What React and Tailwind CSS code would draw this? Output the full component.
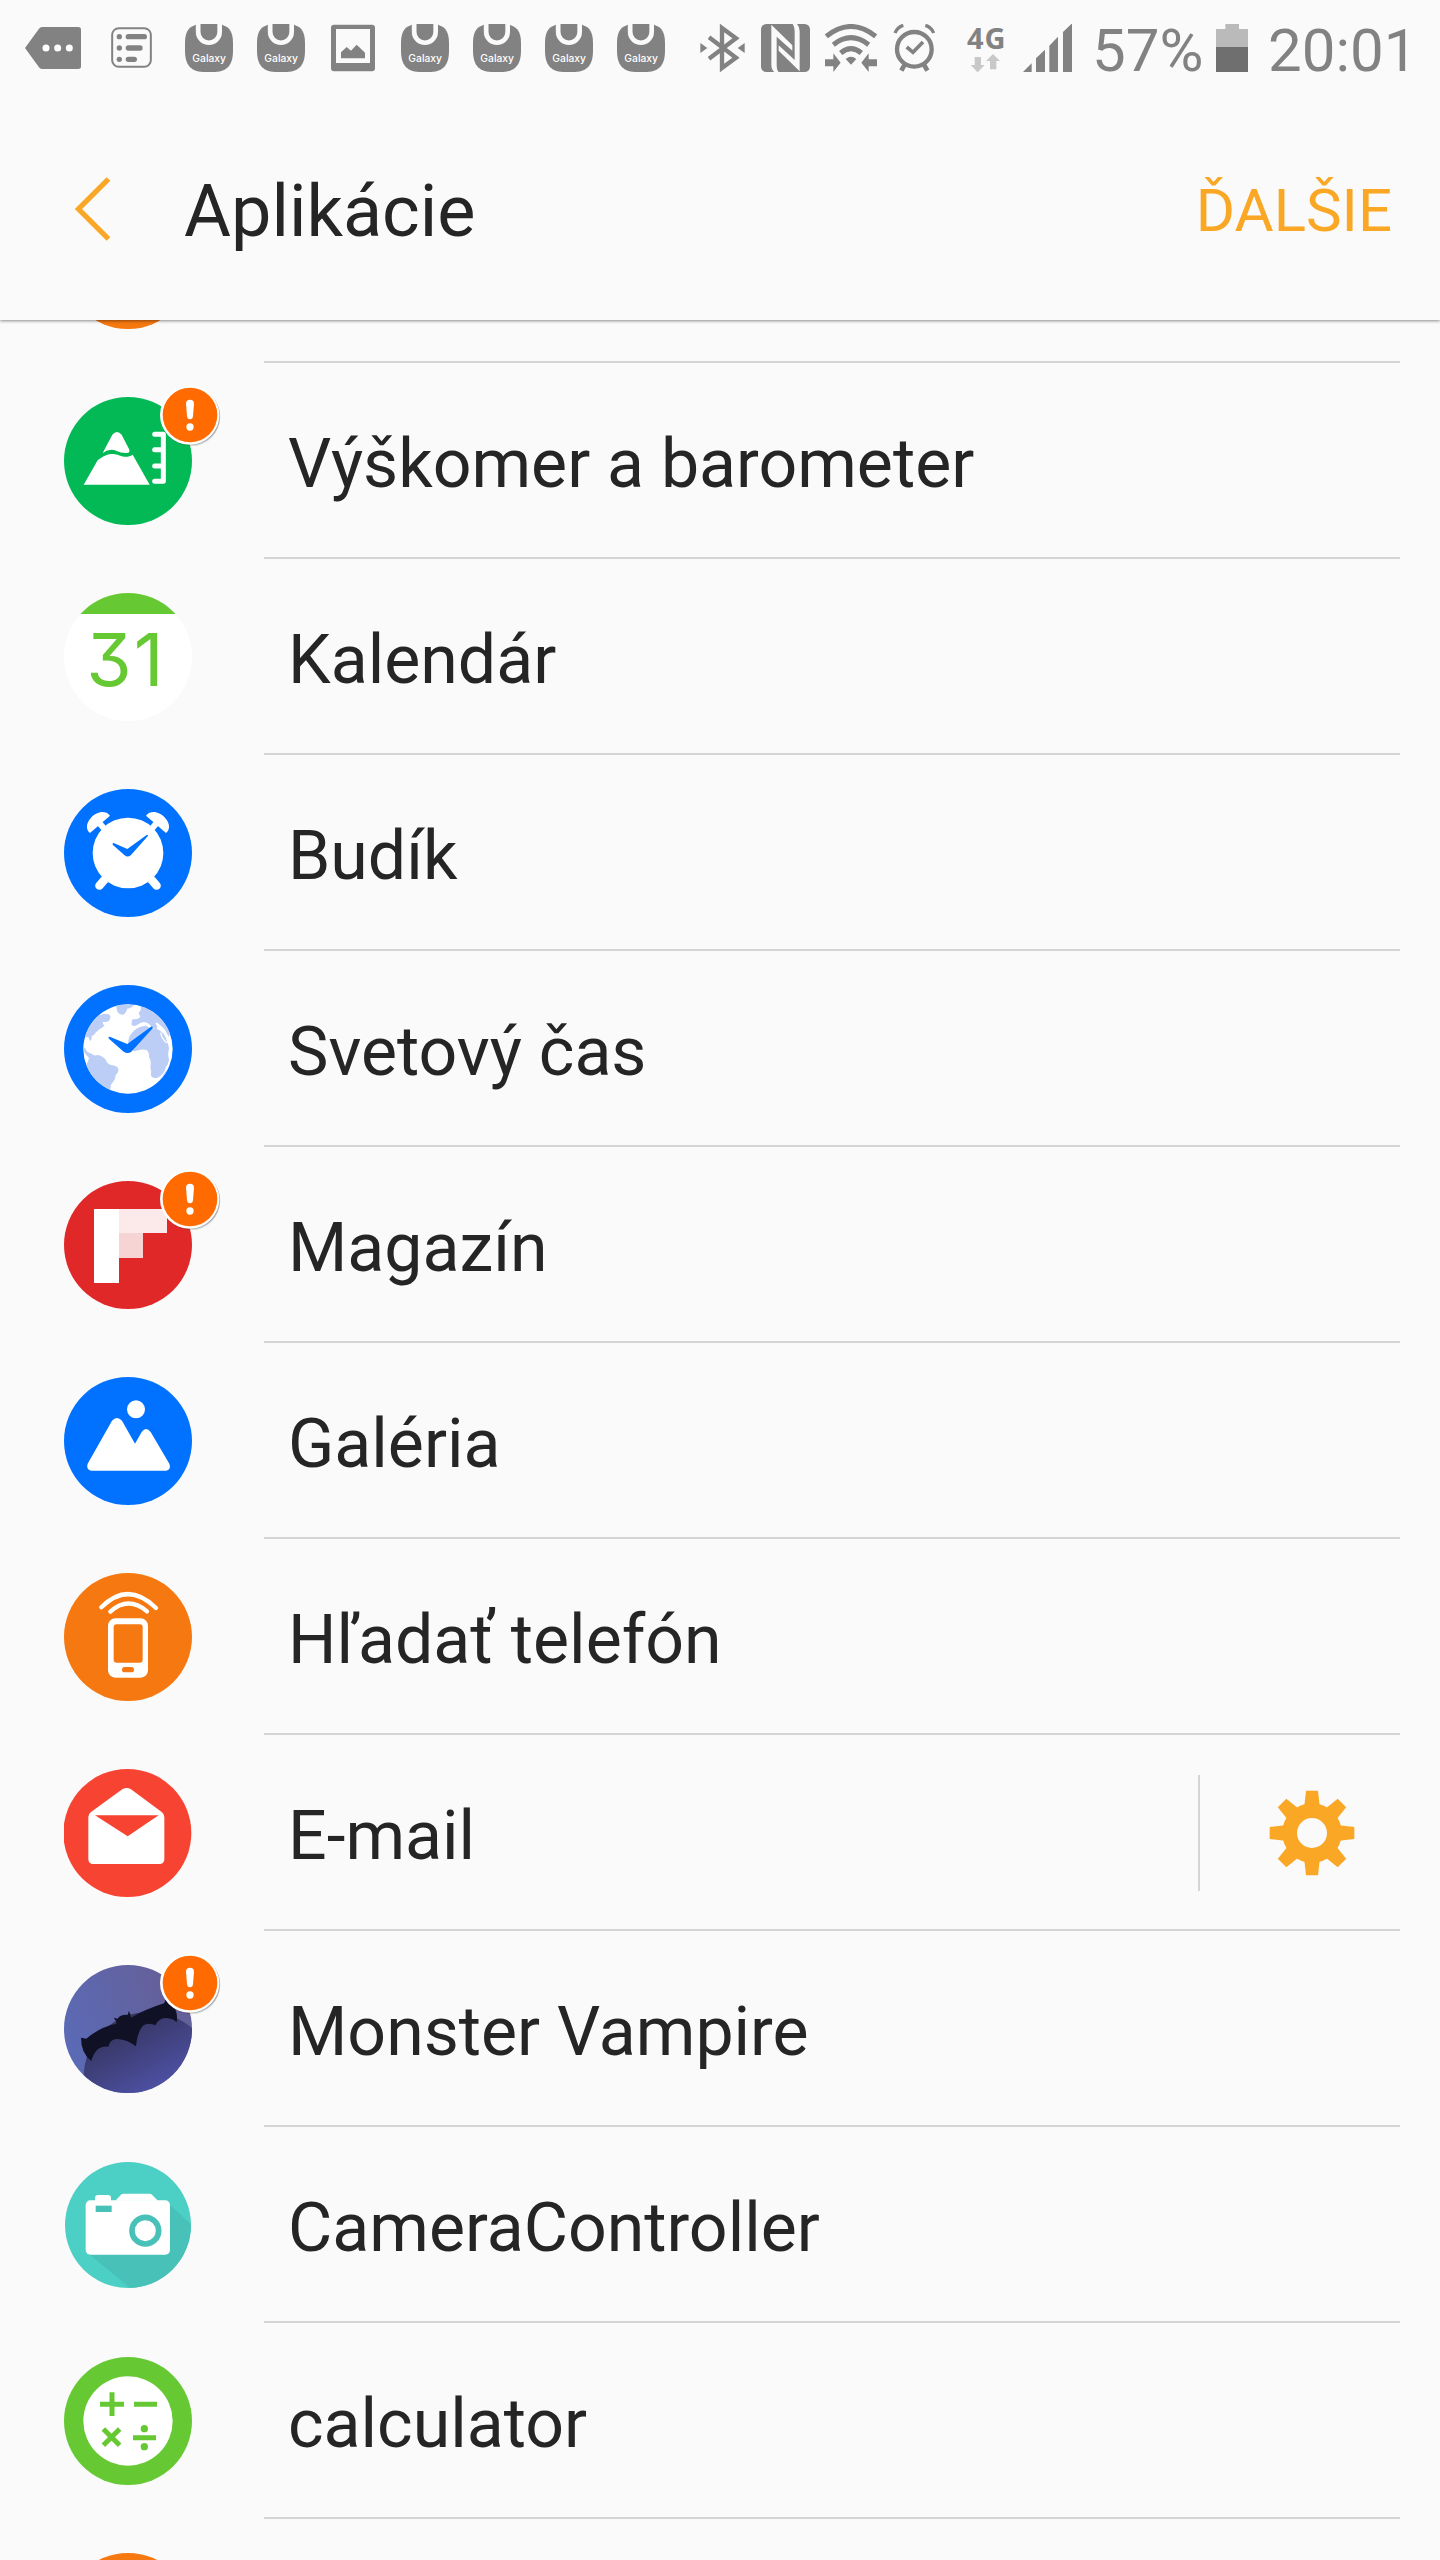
const GALAXY_SLOTS_BEFORE = [0, 1];
const GALAXY_SLOTS_AFTER = [0, 1, 2, 3];

function MessageTagIcon() {
  return (
    <svg viewBox="0 0 168 144" className="ml-[25px] w-14 h-12 shrink-0">
      <path
        fill="#828282"
        d="M0 72L42 14Q46 9 51 9H160Q168 9 168 17V127Q168 135 160 135H51Q46 135 42 130Z"
      />
      <g fill="#fff">
        <circle cx="63" cy="72" r="10.5" />
        <circle cx="98" cy="72" r="10.5" />
        <circle cx="133" cy="72" r="10.5" />
      </g>
    </svg>
  );
}

function ListIcon() {
  return (
    <svg viewBox="0 0 123 144" className="ml-[30px] w-[41px] h-12 shrink-0">
      <rect x="3.5" y="12.5" width="116" height="116" rx="20" fill="none" stroke="#828282" strokeWidth="6" />
      <g fill="#828282">
        <circle cx="25" cy="38" r="8" />
        <circle cx="25" cy="72" r="8" />
        <circle cx="25" cy="106" r="8" />
      </g>
      <path
        d="M52 38H100M52 72H87M52 106H70"
        stroke="#828282"
        strokeWidth="16"
        strokeLinecap="round"
      />
    </svg>
  );
}

function GalaxyIcon() {
  return (
    <svg viewBox="0 0 144 144" className="w-12 h-12 shrink-0">
      <path
        fill="#828282"
        d="M0 56C0 20 14 6 40 1L46 0H98L104 1C130 6 144 20 144 56V80C144 126 124 144 82 144H62C20 144 0 126 0 80Z"
      />
      <path
        d="M39.5 -2V24A32.2 32.2 0 0 0 104 24V-2"
        fill="none"
        stroke="#fafafa"
        strokeWidth="14"
      />
      <text
        x="22"
        y="114"
        textLength="101"
        lengthAdjust="spacingAndGlyphs"
        fill="#fff"
        className="font-['Inter',sans-serif] text-[30px] font-medium"
      >
        Galaxy
      </text>
    </svg>
  );
}

function PictureIcon() {
  return (
    <svg viewBox="0 0 132 144" className="mx-0.5 w-11 h-12 shrink-0">
      <path
        fill="#828282"
        fillRule="evenodd"
        d="M9 2H123Q132 2 132 11V133Q132 142 123 142H9Q0 142 0 133V11Q0 2 9 2ZM15 15V117H117V15ZM30 103V85L47 69L60 80L77 62L102 86V103Z"
      />
    </svg>
  );
}

function BluetoothIcon() {
  return (
    <svg viewBox="0 0 135 144" className="ml-[35px] w-[45px] h-12 shrink-0">
      <path
        d="M27 40L108 101L66 132V12L108 43L27 104"
        fill="none"
        stroke="#828282"
        strokeWidth="13"
      />
      <path fill="#828282" d="M1 57L22 72L1 87ZM134 57L113 72L134 87Z" />
    </svg>
  );
}

function NfcIcon() {
  return (
    <svg viewBox="0 0 147 144" className="ml-4 w-[49px] h-12 shrink-0">
      <rect width="147" height="144" rx="16" fill="#828282" />
      <path
        fill="#fafafa"
        d="M31 2L94 64V80L47 38V122Q47 138 53 144H40Q31 136 31 122ZM116 142L53 80V64L101 108V22Q101 8 95 0H108Q116 8 116 22Z"
      />
    </svg>
  );
}

function WifiIcon() {
  return (
    <svg viewBox="0 0 156 144" className="ml-[15px] w-[52px] h-12 shrink-0">
      <path
        d="M4 37Q78 -22 152 37M25 62Q78 20 131 62M47 87Q78 61 109 87"
        fill="none"
        stroke="#828282"
        strokeWidth="15"
      />
      <path
        fill="#828282"
        d="M62 105Q78 92 94 105L78 122ZM0 106H25V88L47 116L25 144V127H0ZM156 106H131V88L109 116L131 144V127H156Z"
      />
    </svg>
  );
}

function StatusAlarmIcon() {
  return (
    <svg viewBox="0 0 129 144" className="ml-4 w-[43px] h-12 shrink-0">
      <g fill="none" stroke="#828282">
        <circle cx="64" cy="76" r="52" strokeWidth="13" />
        <path d="M41 69L60 85L90 54" strokeWidth="11" />
        <path d="M35 122L25 140M93 122L103 140" strokeWidth="14" />
        <path d="M6 27Q13 9 31 4M122 27Q115 9 97 4" strokeWidth="10" />
      </g>
    </svg>
  );
}

function NetworkIcon() {
  return (
    <div className="relative ml-[31px] w-[38px] h-12 shrink-0">
      <span className="block -mt-1 text-[29px] leading-[36px] font-bold font-['Open_Sans',sans-serif] tracking-[1px]">
        4G
      </span>
      <svg viewBox="0 0 114 60" className="absolute left-0 top-7 w-[38px] h-5">
        <path
          fill="#c8c8c8"
          d="M23 15H42V39H53L32 61L11 39H23ZM69 52V27H57L78 6L99 27H88V52Z"
        />
      </svg>
    </div>
  );
}

function SignalIcon() {
  return (
    <svg viewBox="0 0 147 144" className="ml-[18px] w-[49px] h-12 shrink-0">
      <path
        fill="#828282"
        d="M0 144L26 118V144ZM39 144V103L66 77V144ZM79 144V65L105 38V144ZM120 144V24L147 -2V144Z"
      />
    </svg>
  );
}

function BatteryIcon() {
  return (
    <svg viewBox="0 0 96 144" className="w-8 h-12 shrink-0">
      <path fill="#bababa" d="M28 0H69V15H96V69H0V15H28Z" />
      <rect y="69" width="96" height="75" fill="#6f6f6f" />
    </svg>
  );
}

function StatusBar() {
  return (
    <div className="h-24 pt-6 flex items-start text-[#828282]">
      <MessageTagIcon />
      <ListIcon />
      <div className="ml-[33px] flex gap-6">
        {GALAXY_SLOTS_BEFORE.map((slot) => (
          <GalaxyIcon key={slot} />
        ))}
        <PictureIcon />
        {GALAXY_SLOTS_AFTER.map((slot) => (
          <GalaxyIcon key={slot} />
        ))}
      </div>
      <BluetoothIcon />
      <NfcIcon />
      <WifiIcon />
      <StatusAlarmIcon />
      <NetworkIcon />
      <SignalIcon />
      <span className="ml-5 -mt-[3px] w-[124px] text-[60px] leading-[60px]">
        57%
      </span>
      <BatteryIcon />
      <span className="ml-5 -mt-[3px] text-[60px] leading-[60px]">
        20:01
      </span>
    </div>
  );
}

function AltimeterIcon() {
  return (
    <>
      <circle cx="192" cy="192" r="192" fill="#03b956" />
      <path
        fill="#fff"
        d="M59 263L101 190C125 170 145 168 160 173S190 184 206 173L257 263ZM116 168L145 113Q159 97 173 113L195 156Q200 168 188 168Q172 169 158 162Q138 152 116 168Z"
      />
      <path
        d="M272 112H298V253H272M272 158H298M272 207H298"
        fill="none"
        stroke="#fff"
        strokeWidth="15"
        strokeLinecap="round"
        strokeLinejoin="round"
      />
    </>
  );
}

function CalendarIcon() {
  return (
    <>
      <clipPath id="calendarTop">
        <rect width="384" height="63" />
      </clipPath>
      <circle cx="192" cy="192" r="192" fill="#fff" />
      <circle cx="192" cy="192" r="192" fill="#66c933" clipPath="url(#calendarTop)" />
      <text
        x="67 209"
        y="280"
        fill="#66c933"
        className="font-['Inter',sans-serif] text-[220px] [font-feature-settings:'cv09']"
      >
        31
      </text>
    </>
  );
}

function AlarmIcon() {
  return (
    <>
      <circle cx="192" cy="192" r="192" fill="#0072ff" />
      <circle cx="192" cy="192" r="106" fill="#fff" />
      <path
        d="M134 258L106 290M250 258L278 290"
        stroke="#fff"
        strokeWidth="25"
        strokeLinecap="round"
      />
      <path
        d="M100 95L126 125M284 95L258 125"
        stroke="#fff"
        strokeWidth="18"
      />
      <path
        fill="#fff"
        d="M78 132C66 124 65 104 80 88C96 68 124 62 138 80ZM306 132C318 124 319 104 304 88C288 68 260 62 246 80Z"
      />
      <path
        fill="#0072ff"
        d="M149 162L190 180L248 138Q254 136 251 142L201 198Q191 207 181 198L146 167Q144 162 149 162Z"
      />
    </>
  );
}

function WorldClockIcon() {
  return (
    <>
      <clipPath id="globe">
        <circle cx="192" cy="192" r="134" />
      </clipPath>
      <circle cx="192" cy="192" r="192" fill="#0072ff" />
      <circle cx="192" cy="192" r="134" fill="#fff" />
      <g fill="#bccdf6" clipPath="url(#globe)">
        <path d="M50 180L60 158Q66 154 74 157Q75 166 80 168Q84 162 83 153Q92 151 96 142Q106 132 116 127L122 121Q114 118 117 110Q127 113 135 107Q142 98 137 90Q129 84 116 87Q107 93 105 88L128 70L60 90Z" />
        <path d="M56 184Q66 190 67 198Q77 205 84 207Q90 214 100 210Q115 212 126 225Q128 235 140 240Q164 243 163 253Q165 260 155 270Q153 288 145 293Q137 300 140 320L100 310L66 240Q74 228 75 218Q62 208 58 195Z" />
        <path d="M156 60L160 80Q167 91 179 89Q188 80 190 71Q201 70 211 60Z" />
        <path d="M232 50L230 76Q223 82 224 88Q232 94 226 99Q216 104 206 102Q202 110 203 119Q209 127 219 120Q228 113 240 111Q252 113 258 120Q262 128 275 132Q284 128 278 121Q270 112 280 113Q291 122 304 135Q308 145 314 156Q315 140 335 150L330 70Z" />
        <path d="M246 122Q258 132 276 130Q299 140 307 163Q314 180 315 190Q310 210 315 222Q314 238 306 245Q301 268 281 278Q267 282 261 273Q263 258 259 246Q263 227 255 217Q256 201 248 195Q231 190 213 199Q195 192 193 176Q191 160 203 145Q216 125 246 122Z" />
        <path d="M294 277L305 259Q310 264 305 273L290 289Z" />
      </g>
      <path
        d="M290 143Q294 165 310 174"
        fill="none"
        stroke="#fff"
        strokeWidth="4"
      />
      <path
        fill="#0072ff"
        d="M137 155L190 177L261 125Q268 123 266 130L202 200Q191 208 179 200L135 161Q131 155 137 155Z"
      />
    </>
  );
}

function MagazineIcon() {
  return (
    <>
      <circle cx="192" cy="192" r="192" fill="#e12828" />
      <rect x="90" y="84" width="75" height="222" fill="#fff" />
      <rect x="165" y="84" width="144" height="72" fill="#fce9e9" />
      <rect x="165" y="156" width="72" height="75" fill="#f7d4d4" />
    </>
  );
}

function GalleryIcon() {
  return (
    <>
      <circle cx="192" cy="192" r="192" fill="#0072ff" />
      <circle cx="216" cy="97" r="27" fill="#fff" />
      <path
        fill="#fff"
        d="M71 260L144 131Q159 115 174 131L213 200L233 165Q246 147 260 165L316 260Q323 277 307 281H81Q65 277 71 260Z"
      />
    </>
  );
}

function FindPhoneIcon() {
  return (
    <>
      <circle cx="192" cy="192" r="192" fill="#f67810" />
      <rect x="132" y="136" width="120" height="178" rx="22" fill="#fff" />
      <rect x="149" y="154" width="87" height="115" rx="9" fill="#f67810" />
      <rect x="174" y="282" width="36" height="16" rx="8" fill="#f67810" />
      <path
        d="M139 116Q192 68 249 115M112 103Q192 23 276 105"
        fill="none"
        stroke="#fff"
        strokeWidth="13"
        strokeLinecap="round"
      />
    </>
  );
}

function EmailIcon() {
  return (
    <>
      <circle cx="190" cy="192" r="192" fill="#f74432" />
      <path
        fill="#fff"
        d="M73 144Q73 135 81 129L176 60Q188 54 200 60L293 129Q301 135 301 144V270Q301 285 286 285H88Q73 285 73 270Z"
      />
      <path fill="#f74432" d="M93 139H284L191 202Z" />
    </>
  );
}

function VampireIcon() {
  return (
    <>
      <defs>
        <linearGradient id="sky" x1="0" y1="0.5" x2="0.8" y2="0.2">
          <stop offset="0" stopColor="#5b6ab5" />
          <stop offset="1" stopColor="#64609a" />
        </linearGradient>
        <linearGradient id="moon" x1="0.25" y1="0.1" x2="0.6" y2="0.75">
          <stop offset="0" stopColor="#35355f" />
          <stop offset="0.8" stopColor="#4e51a5" />
        </linearGradient>
        <clipPath id="night">
          <circle cx="192" cy="192" r="192" />
        </clipPath>
      </defs>
      <g clipPath="url(#night)">
        <rect width="384" height="384" fill="url(#sky)" />
        <circle cx="255" cy="337" r="196" fill="url(#moon)" />
      </g>
      <path
        fill="#101125"
        d="M51 218L67 221Q109 185 158 176Q158 169 149 158L161 161Q167 148 192 149L194 138Q200 145 201 158Q246 132 300 115Q305 108 302 103Q345 123 338 172Q327 160 306 159Q283 160 274 181Q258 172 240 180Q221 195 216 244Q193 225 160 222Q137 223 133 245Q95 240 82 288Q51 265 51 218Z"
      />
    </>
  );
}

function CameraIcon() {
  return (
    <>
      <clipPath id="cameraDisc">
        <circle cx="192" cy="192" r="189" />
      </clipPath>
      <circle cx="192" cy="192" r="189" fill="#4ccfc4" />
      <path
        fill="#48c1b8"
        clipPath="url(#cameraDisc)"
        d="M316 130L400 208V400H221L74 278Z"
      />
      <rect x="65" y="118" width="253" height="163" rx="14" fill="#fff" />
      <rect x="93" y="102" width="48" height="30" rx="9" fill="#fff" />
      <path fill="#fff" d="M154 119L171 101Q174 98 178 98H257Q261 98 264 101L282 119Z" />
      <rect x="95" y="134" width="48" height="19" fill="#48c1b8" />
      <circle cx="244" cy="209" r="40" fill="none" stroke="#48c1b8" strokeWidth="17" />
    </>
  );
}

function CalculatorIcon() {
  return (
    <>
      <circle cx="192" cy="192" r="192" fill="#66c933" />
      <circle cx="192" cy="192" r="134" fill="#fff" />
      <path
        d="M108 141.500H180M144 106V177M210 141.500H279M118 216L167 265M167 216L118 265M207 242H276"
        stroke="#66c933"
        strokeWidth="15"
      />
      <circle cx="241" cy="215" r="11" fill="#66c933" />
      <circle cx="241" cy="269" r="11" fill="#66c933" />
    </>
  );
}

function PlainIcon() {
  return <circle cx="192" cy="192" r="192" fill="#f67810" />;
}

function WarningBadge() {
  return (
    <svg viewBox="0 0 192 192" className="absolute left-[94px] -top-[14px] w-16 h-16">
      <circle cx="99" cy="102" r="88" fill="#000" opacity="0.12" />
      <circle cx="98" cy="99" r="88" fill="#000" opacity="0.22" />
      <circle cx="95" cy="96" r="89" fill="#fff" />
      <circle cx="96" cy="96" r="82" fill="#ff6b00" />
      <path
        fill="#fff"
        d="M84 62Q84 50 96 50T108 62L105 99Q104 109 96 109T87 99Z"
      />
      <circle cx="96" cy="132" r="11" fill="#fff" />
    </svg>
  );
}

const TEETH = [0, 45, 90, 135, 180, 225, 270, 315];

function GearIcon() {
  return (
    <svg viewBox="-129 -129 258 258" className="w-[86px] h-[86px]">
      <circle r="67" fill="none" stroke="#faa726" strokeWidth="44" />
      {TEETH.map((angle) => (
        <path
          key={angle}
          d="M-18 -127H18L23 -82H-23Z"
          fill="#faa726"
          transform={`rotate(${angle})`}
        />
      ))}
    </svg>
  );
}

const APPS = [
  { id: "previous", name: "", Icon: PlainIcon },
  { id: "altimeter", name: "Výškomer a barometer", Icon: AltimeterIcon, warning: true },
  { id: "calendar", name: "Kalendár", Icon: CalendarIcon },
  { id: "alarm", name: "Budík", Icon: AlarmIcon },
  { id: "world", name: "Svetový čas", Icon: WorldClockIcon },
  { id: "magazine", name: "Magazín", Icon: MagazineIcon, warning: true },
  { id: "gallery", name: "Galéria", Icon: GalleryIcon },
  { id: "phone", name: "Hľadať telefón", Icon: FindPhoneIcon },
  { id: "email", name: "E-mail", Icon: EmailIcon, settings: true },
  { id: "vampire", name: "Monster Vampire", Icon: VampireIcon, warning: true },
  { id: "camera", name: "CameraController", Icon: CameraIcon },
  { id: "calculator", name: "calculator", Icon: CalculatorIcon },
  { id: "next", name: "", Icon: PlainIcon },
];

function AppRow({ name, Icon, warning, settings }) {
  return (
    <li className="h-[196px] pl-16 pr-10 flex">
      <div className="relative mt-[34px] w-32 h-32 shrink-0">
        <svg viewBox="0 0 384 384" className="w-32 h-32">
          <Icon />
        </svg>
        {warning && <WarningBadge />}
      </div>
      <div className="ml-[72px] pl-6 flex-1 flex border-b-2 border-[#d5d5d5]">
        <span className="mt-[61px] flex-1 text-[68px] leading-[80px] whitespace-nowrap">
          {name}
        </span>
        {settings && (
          <button className="mt-10 h-[116px] w-[202px] pl-[69px] flex items-center border-l-2 border-[#d5d5d5]">
            <GearIcon />
          </button>
        )}
      </div>
    </li>
  );
}

export default function App() {
  return (
    <div className="w-[1440px] h-[2560px] overflow-hidden flex flex-col bg-[#fafafa] text-[#252525] font-['Roboto',sans-serif]">
      <header className="relative z-10 h-80 shrink-0 bg-[#fafafa] shadow-[0_1px_3px_rgba(0,0,0,0.45)]">
        <StatusBar />
        <div className="h-56 pl-[74px] pr-12 flex items-start">
          <button className="mt-[80px] shrink-0">
            <svg viewBox="0 0 38 66" className="w-[38px] h-[66px]">
              <path
                d="M34.500 3L4.500 33L34.500 63"
                fill="none"
                stroke="#faa726"
                strokeWidth="5.300"
              />
            </svg>
          </button>
          <h1 className="mt-[76px] ml-[72px] flex-1 text-[72px] leading-[80px]">
            Aplikácie
          </h1>
          <button className="mt-[75px] text-[60px] leading-[80px] text-[#faa726]">
            ĎALŠIE
          </button>
        </div>
      </header>
      <ul className="-mt-[153px]">
        {APPS.map((app) => (
          <AppRow key={app.id} {...app} />
        ))}
      </ul>
    </div>
  );
}
